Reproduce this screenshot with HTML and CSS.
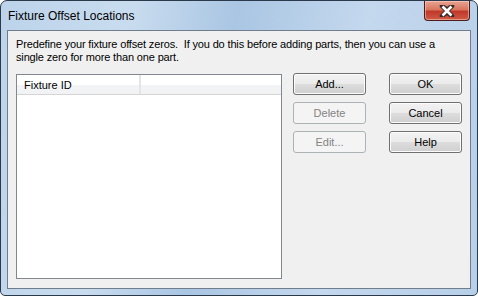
FILE: index.html
```html
<!DOCTYPE html>
<html lang="en">

<head>
  <title>Fixture Offset Locations</title>
  <meta name="viewport" content="width=device-width, initial-scale=1">
  <link rel="stylesheet" href="styles.css">
</head>

<body>
  <div class="window">

    <!-- Title Bar -->
    <div class="titlebar">
      <span class="title">Fixture Offset Locations</span>
      <div class="close-btn">
        <svg width="16" height="12" viewBox="0 0 16 12">
          <path d="M3 1 L8 4.5 L13 1 M3 11 L8 7.5 L13 11 M3 1 L13 11 M13 1 L3 11" stroke="#3a2a2a" stroke-width="4.5" fill="none" stroke-linecap="round"/>
          <path d="M3.5 1.5 L12.5 10.5 M12.5 1.5 L3.5 10.5" stroke="#fff" stroke-width="2.6" fill="none"/>
        </svg>
      </div>
    </div>

    <!-- Client Area -->
    <div class="client">
      <p class="intro">Predefine your fixture offset zeros.&nbsp; If you do this before adding parts, then you can use a single zero for more than one part.</p>
      <div class="content">
        <div class="listview">
          <div class="list-header">
            <div class="col col-id">Fixture ID</div>
            <div class="col col-rest"></div>
          </div>
          <div class="list-body"></div>
        </div>
        <div class="btn-col">
          <button class="btn">Add...</button>
          <button class="btn" disabled>Delete</button>
          <button class="btn" disabled>Edit...</button>
        </div>
        <div class="btn-col">
          <button class="btn">OK</button>
          <button class="btn">Cancel</button>
          <button class="btn">Help</button>
        </div>
      </div>
    </div>

  </div>
</body>

</html>
```

FILE: styles.css
```css
* {
  box-sizing: border-box;
  margin: 0;
  padding: 0;
}

body {
  width: 478px;
  height: 296px;
  background: #ffffff;
  overflow: hidden;
}

.window {
  width: 478px;
  height: 296px;
  border: 1px solid #2b3a4a;
  border-radius: 7px 7px 5px 5px;
  background: linear-gradient(100deg, #bcd3ea 0%, #c9dcef 25%, #aac6e3 45%, #c4d8ee 70%, #b7cfe8 100%);
  display: flex;
  flex-direction: column;
  padding: 0 6px 6px 6px;
}

.titlebar {
  height: 29px;
  display: flex;
  align-items: flex-start;
  justify-content: space-between;
}

.title {
  font-family: "Liberation Sans", Arial, sans-serif;
  font-size: 12px;
  color: #000;
  margin-top: 8px;
  margin-left: 1px;
}

.close-btn {
  width: 46px;
  height: 20px;
  margin-right: 1px;
  border: 1px solid #4a1d18;
  border-top: none;
  border-radius: 0 0 4px 4px;
  background: linear-gradient(#e8a493 0%, #d9765e 45%, #c0392b 55%, #cf5a45 100%);
  display: flex;
  align-items: center;
  justify-content: center;
  box-shadow: inset 0 0 0 1px rgba(255, 220, 210, 0.5);
}

.client {
  flex: 1;
  background: #f0f0f0;
  border: 1px solid #6f7d8c;
  padding: 7px 8px 8px 8px;
  font-family: "Liberation Sans", Arial, sans-serif;
  font-size: 11px;
  color: #000;
}

.intro {
  line-height: 13px;
  width: 440px;
  letter-spacing: -0.15px;
}

.content {
  display: flex;
  margin-top: 10px;
}

.listview {
  width: 266px;
  height: 205px;
  border: 1px solid #828790;
  background: #fff;
  display: flex;
  flex-direction: column;
}

.list-header {
  display: flex;
  height: 20px;
  border-bottom: 1px solid #d5d5d5;
  background: linear-gradient(#ffffff 0%, #ffffff 50%, #f3f4f6 51%, #f1f2f4 100%);
}

.col {
  padding: 4px 0 0 7px;
  font-size: 11px;
}

.col-id {
  width: 124px;
  border-right: 2px solid #e3e5e8;
}

.col-rest {
  flex: 1;
}

.btn-col {
  display: flex;
  flex-direction: column;
  gap: 7px;
  margin-left: 11px;
  margin-top: -1px;
}

.btn-col + .btn-col {
  margin-left: 23px;
}

.btn {
  width: 73px;
  height: 22px;
  border: 1px solid #707070;
  border-radius: 3px;
  background: linear-gradient(#f2f2f2 0%, #ebebeb 50%, #dddddd 51%, #cfcfcf 100%);
  box-shadow: inset 0 0 0 1px #fcfcfc;
  font-family: "Liberation Sans", Arial, sans-serif;
  font-size: 11px;
  color: #000;
}

.btn:disabled {
  border-color: #adb2b5;
  background: #f4f4f4;
  box-shadow: none;
  color: #838383;
}
```
